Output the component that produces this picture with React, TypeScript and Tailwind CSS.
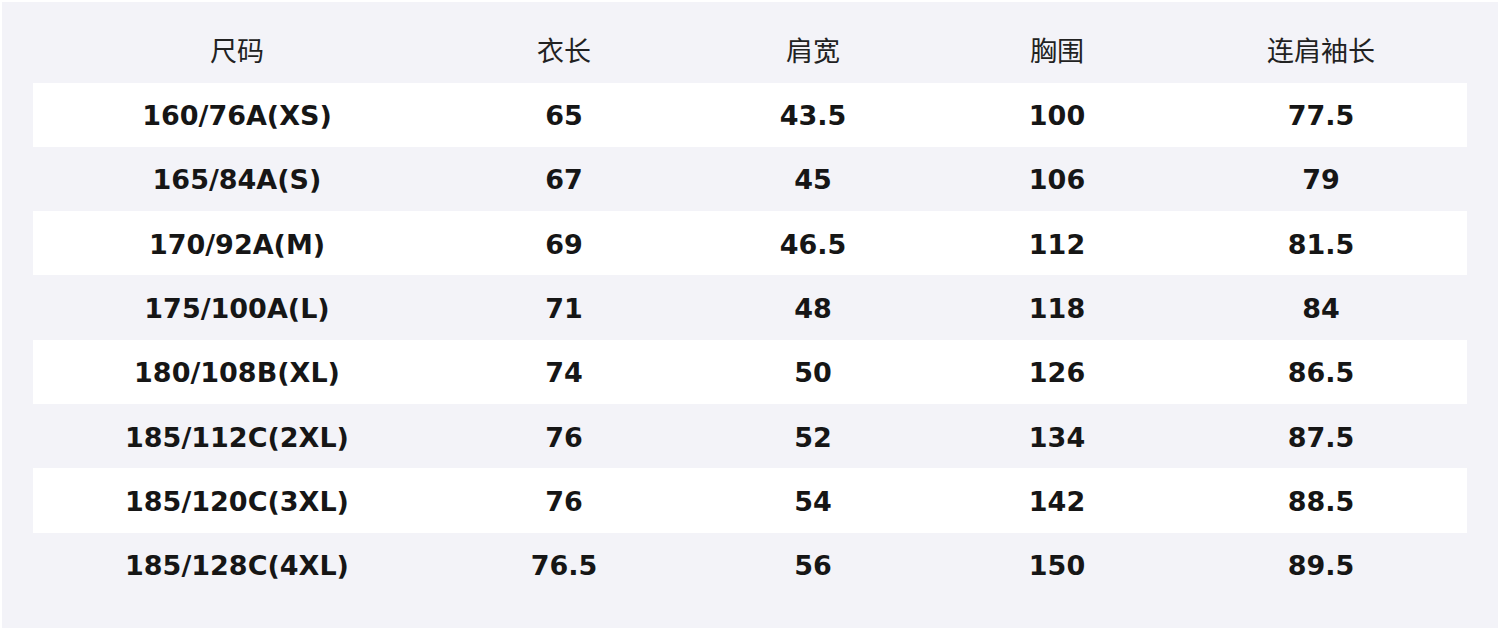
const headers = ["尺码", "衣长", "肩宽", "胸围", "连肩袖长"];

const rows = [
  ["160/76A(XS)", "65", "43.5", "100", "77.5"],
  ["165/84A(S)", "67", "45", "106", "79"],
  ["170/92A(M)", "69", "46.5", "112", "81.5"],
  ["175/100A(L)", "71", "48", "118", "84"],
  ["180/108B(XL)", "74", "50", "126", "86.5"],
  ["185/112C(2XL)", "76", "52", "134", "87.5"],
  ["185/120C(3XL)", "76", "54", "142", "88.5"],
  ["185/128C(4XL)", "76.5", "56", "150", "89.5"],
];

const colWidths = ["w-[408px]", "w-[246px]", "w-[252px]", "w-[236px]", "w-[292px]"];

export default function App() {
  return (
    <div className="min-h-screen bg-white p-[2px] font-['DejaVu_Sans','Noto_Sans_CJK_SC',sans-serif]">
      <div className="h-[626px] w-[1496px] bg-[#f3f3f8] pl-[31px] pt-[16px]">
        <table className="w-[1434px] table-fixed border-collapse">
          <colgroup>
            {colWidths.map((w, i) => (
              <col key={i} className={w} />
            ))}
          </colgroup>
          <thead>
            <tr className="h-[64.5px]">
              {headers.map((h) => (
                <th key={h} className="pt-[3px] text-center align-middle text-[27px] font-normal text-[#222]">
                  {h}
                </th>
              ))}
            </tr>
          </thead>
          <tbody>
            {rows.map((row, i) => (
              <tr key={i} className={`h-[64.33px] ${i % 2 === 0 ? "bg-white" : ""}`}>
                {row.map((cell, j) => (
                  <td key={j} className="pt-[3px] text-center align-middle text-[27px] font-bold text-[#161616]">
                    {cell}
                  </td>
                ))}
              </tr>
            ))}
          </tbody>
        </table>
      </div>
    </div>
  );
}
